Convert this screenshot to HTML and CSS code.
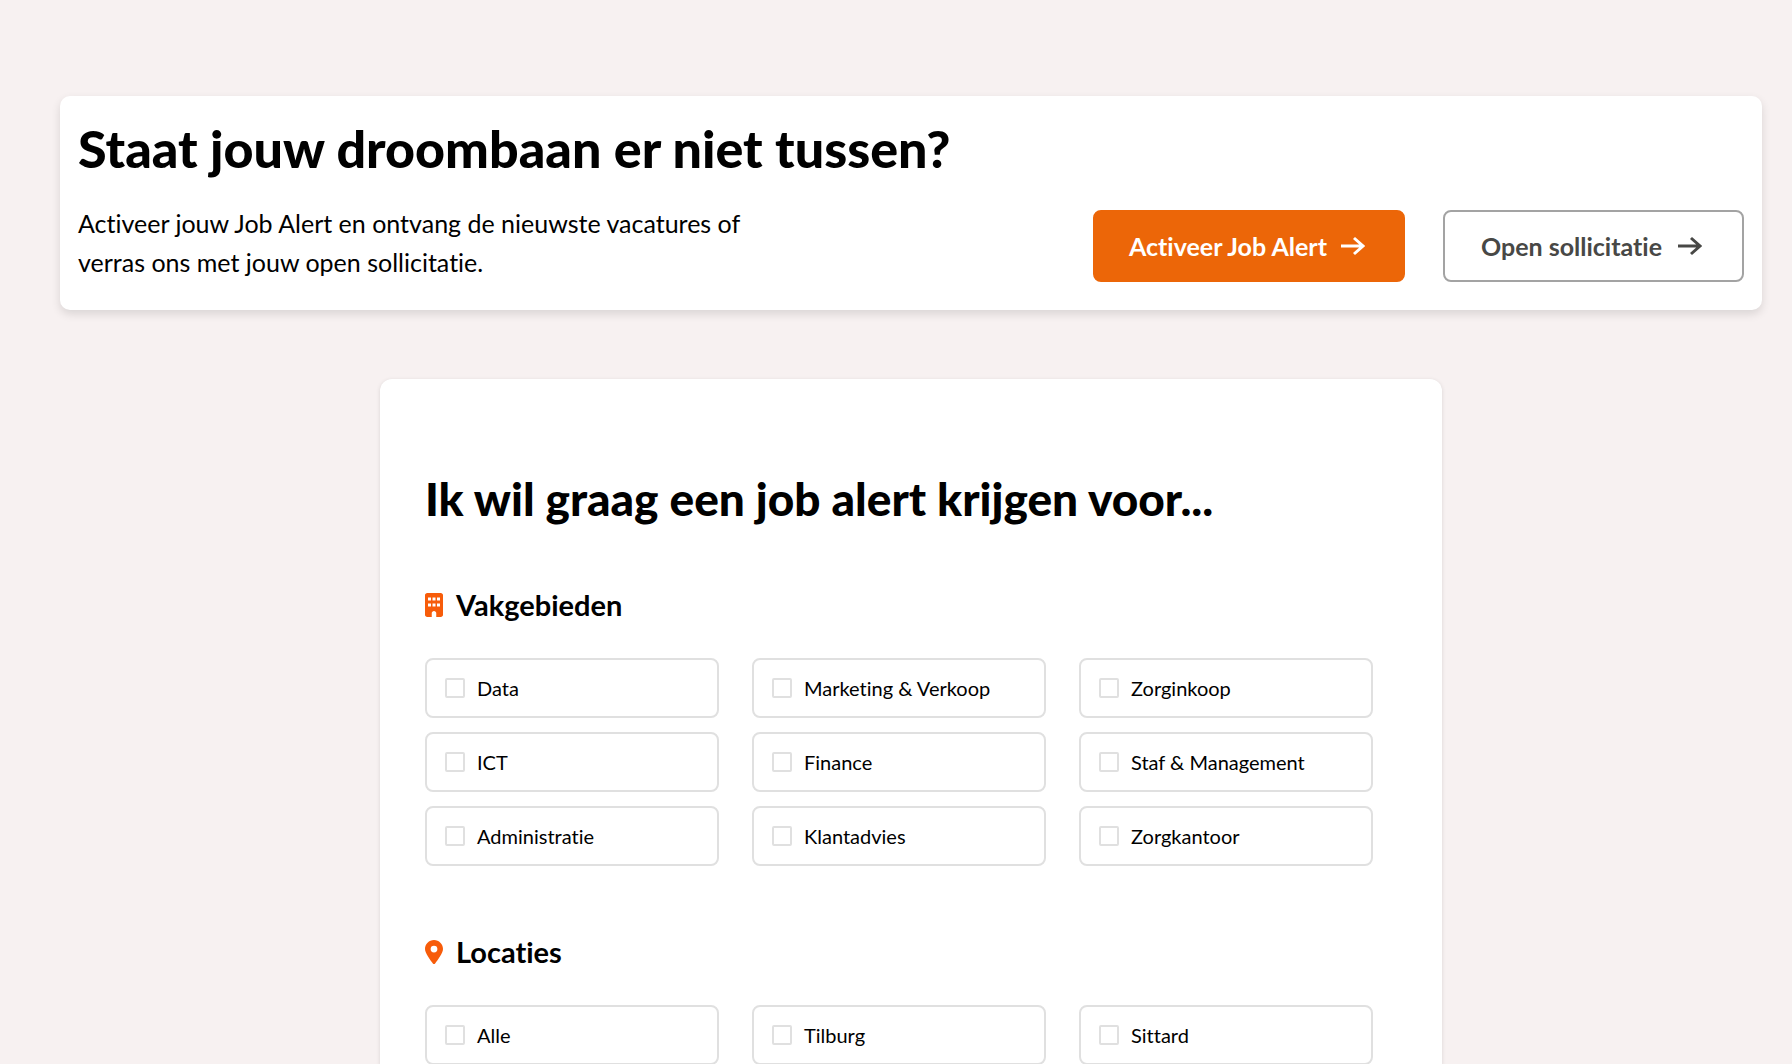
FILE: index.html
```html
<!DOCTYPE html>
<html lang="nl">
<head>
	<meta charset="UTF-8">
	<meta name="viewport" content="width=device-width, initial-scale=1">
	<title>Job Alert</title>
	<link rel="stylesheet" href="styles.css">
</head>
<body>
	<main class="page">
		<section class="banner">
			<h1>Staat jouw droombaan er niet tussen?</h1>
			<div class="banner-row">
				<p>Activeer jouw Job Alert en ontvang de nieuwste vacatures of verras ons met jouw open sollicitatie.</p>
				<div class="actions">
					<a href="#jobalert" class="btn btn-primary">
						Activeer Job Alert
						<svg class="arrow" viewBox="0 0 24 20" aria-hidden="true"><path d="M0 10h22M13 2l9 8-9 8"/></svg>
					</a>
					<a href="#" class="btn btn-outline">
						Open sollicitatie
						<svg class="arrow" viewBox="0 0 24 20" aria-hidden="true"><path d="M0 10h22M13 2l9 8-9 8"/></svg>
					</a>
				</div>
			</div>
		</section>

		<form class="card" id="jobalert">
			<h2>Ik wil graag een job alert krijgen voor...</h2>

			<section class="group">
				<h3>
					<svg class="icon" viewBox="0 0 384 512" aria-hidden="true"><path fill-rule="evenodd" d="M48 0C21.500 0 0 21.500 0 48V464c0 26.500 21.500 48 48 48h96V432c0-26.500 21.500-48 48-48s48 21.500 48 48v80h96c26.500 0 48-21.500 48-48V48c0-26.500-21.500-48-48-48H48zM64 96h64v64H64zM160 96h64v64h-64zM256 96h64v64h-64zM64 224h64v64H64zM160 224h64v64h-64zM256 224h64v64h-64z"/></svg>
					Vakgebieden
				</h3>
				<div class="options">
					<label class="option"><input type="checkbox" name="vakgebied" value="data">Data</label>
					<label class="option"><input type="checkbox" name="vakgebied" value="marketing">Marketing &amp; Verkoop</label>
					<label class="option"><input type="checkbox" name="vakgebied" value="zorginkoop">Zorginkoop</label>
					<label class="option"><input type="checkbox" name="vakgebied" value="ict">ICT</label>
					<label class="option"><input type="checkbox" name="vakgebied" value="finance">Finance</label>
					<label class="option"><input type="checkbox" name="vakgebied" value="staf">Staf &amp; Management</label>
					<label class="option"><input type="checkbox" name="vakgebied" value="administratie">Administratie</label>
					<label class="option"><input type="checkbox" name="vakgebied" value="klantadvies">Klantadvies</label>
					<label class="option"><input type="checkbox" name="vakgebied" value="zorgkantoor">Zorgkantoor</label>
				</div>
			</section>

			<section class="group">
				<h3>
					<svg class="icon" viewBox="0 0 384 512" aria-hidden="true"><path fill-rule="evenodd" d="M216 499C267 435 384 279 384 192C384 86 298 0 192 0S0 86 0 192c0 87 117 243 168 307c12 15 36 15 48 0zM192 120a72 72 0 1 1 0 144a72 72 0 1 1 0-144z"/></svg>
					Locaties
				</h3>
				<div class="options">
					<label class="option"><input type="checkbox" name="locatie" value="alle">Alle</label>
					<label class="option"><input type="checkbox" name="locatie" value="tilburg">Tilburg</label>
					<label class="option"><input type="checkbox" name="locatie" value="sittard">Sittard</label>
				</div>
			</section>
		</form>
	</main>
</body>
</html>
```
FILE: styles.css
```css
*{
	box-sizing: border-box;
	margin: 0;
	padding: 0;
}
body{
	background-color: #f7f1f1;
	font-family: Lato, "Open Sans", sans-serif;
	font-variant-ligatures: none;
	color: #000;
}
.page{
	padding: 96px 30px 0 60px;
}
.banner{
	padding: 20px 18px 28px;
	border-radius: 10px;
	background-color: #fff;
	box-shadow: 0 4px 10px rgba(0,0,0,.12);
}
.banner h1{
	font-size: 52px;
	font-weight: 900;
	line-height: 64px;
}
.banner-row{
	display: flex;
	justify-content: space-between;
	align-items: flex-end;
	gap: 40px;
	margin-top: 24px;
}
.banner-row p{
	max-width: 720px;
	font-size: 25px;
	line-height: 39px;
}
.actions{
	display: flex;
	gap: 38px;
}
.btn{
	display: flex;
	align-items: center;
	gap: 14px;
	height: 72px;
	padding: 0 38px 0 34px;
	border: 2px solid #ec6608;
	border-radius: 8px;
	font-size: 25px;
	font-weight: bold;
	white-space: nowrap;
	text-decoration: none;
}
.btn-primary{
	background-color: #ec6608;
	color: #fff;
}
.btn-outline{
	gap: 16px;
	padding: 0 40px 0 36px;
	border-color: #a3a3a3;
	background-color: #fff;
	color: #484846;
}
.arrow{
	width: 24px;
	height: 20px;
	fill: none;
	stroke: currentColor;
	stroke-width: 3;
}
.card{
	max-width: 1062px;
	margin: 69px auto 0;
	padding: 88px 69px 0 45px;
	border-radius: 12px 12px 0 0;
	background-color: #fff;
	box-shadow: 0 1px 4px rgba(0,0,0,.12);
}
.card h2{
	margin-bottom: 54px;
	font-size: 46px;
	font-weight: 900;
	line-height: 64px;
}
.group{
	margin-bottom: 66px;
}
.group:last-child{
	margin-bottom: 0;
}
.group h3{
	display: flex;
	align-items: center;
	gap: 13px;
	font-size: 29px;
	line-height: 40px;
}
.icon{
	width: 18px;
	height: 24px;
	fill: #f75c0a;
}
.options{
	display: grid;
	grid-template-columns: repeat(3, 1fr);
	gap: 14px 33px;
	margin-top: 33px;
}
.option{
	display: flex;
	align-items: center;
	gap: 12px;
	height: 60px;
	padding-left: 18px;
	border: 2px solid #e0e0e0;
	border-radius: 8px;
	font-size: 20px;
	cursor: pointer;
}
.option input{
	appearance: none;
	width: 20px;
	height: 20px;
	border: 2px solid #e0e0e0;
	border-radius: 2px;
	background-color: #fff;
}
.option input:checked{
	border-color: #ec6608;
	background-color: #ec6608;
}
```
